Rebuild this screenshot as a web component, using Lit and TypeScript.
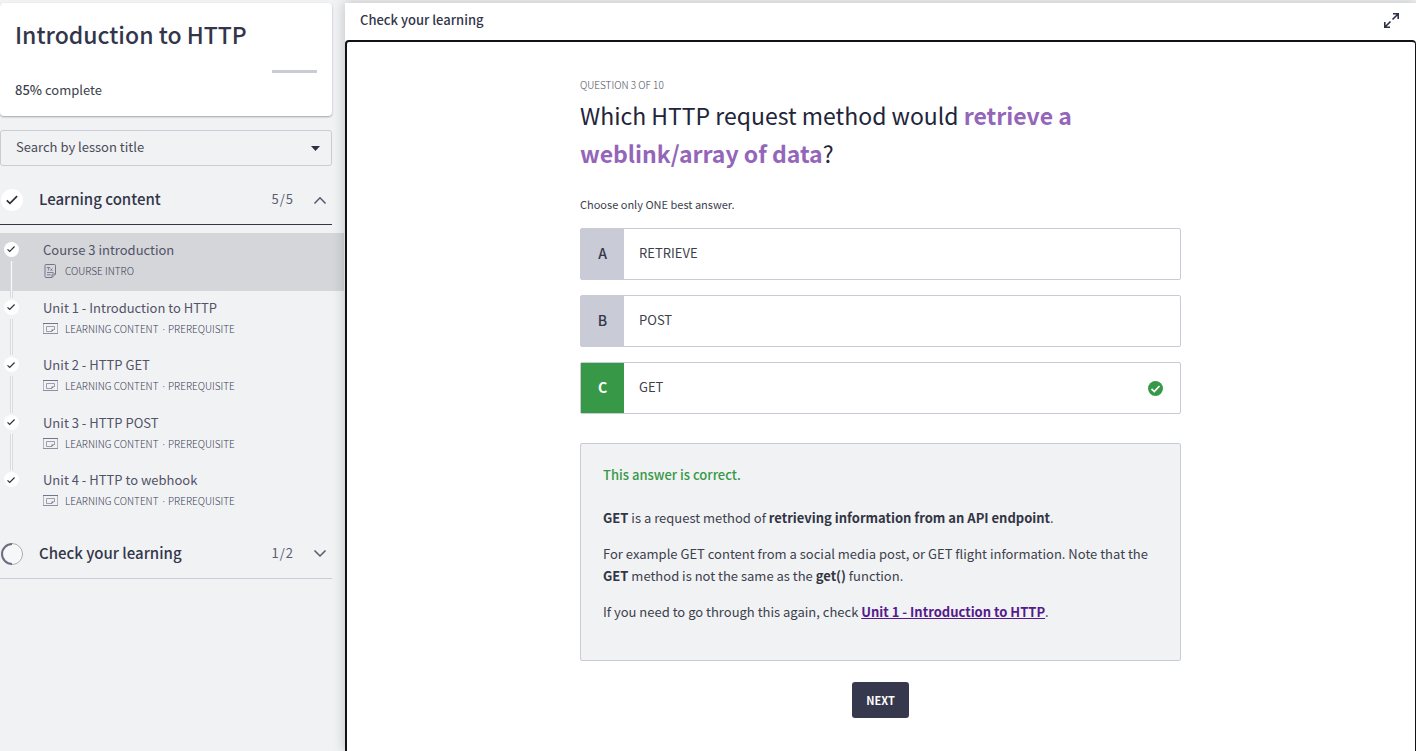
import { LitElement, html, css, nothing } from "lit";
import { customElement } from "lit/decorators.js";
import { classMap } from "lit/directives/class-map.js";

interface Lesson {
  title: string;
  meta: string[];
  kind: "text" | "media";
}

interface Answer {
  letter: string;
  text: string;
}

const LESSONS: Lesson[] = [
  { title: "Course 3 introduction", meta: ["COURSE INTRO"], kind: "text" },
  { title: "Unit 1 - Introduction to HTTP", meta: ["LEARNING CONTENT", "PREREQUISITE"], kind: "media" },
  { title: "Unit 2 - HTTP GET", meta: ["LEARNING CONTENT", "PREREQUISITE"], kind: "media" },
  { title: "Unit 3 - HTTP POST", meta: ["LEARNING CONTENT", "PREREQUISITE"], kind: "media" },
  { title: "Unit 4 - HTTP to webhook", meta: ["LEARNING CONTENT", "PREREQUISITE"], kind: "media" },
];

const ANSWERS: Answer[] = [
  { letter: "A", text: "RETRIEVE" },
  { letter: "B", text: "POST" },
  { letter: "C", text: "GET" },
];

const CORRECT = "C";

const textIcon = html`<svg class="kind" width="15" height="14" viewBox="0 0 15 14" fill="none" stroke="#73758a" aria-hidden="true">
  <path d="M9 13.500H3a1 1 0 0 1-1-1v-11a1 1 0 0 1 1-1h8.500a1 1 0 0 1 1 1V10zM9 13.500V11a1 1 0 0 1 1-1h2.500" />
  <path d="M3.800 3.500h3.200M5.400 3.500v3M7.500 4.500l1.800 2.300M9.300 4.500L7.500 6.800M4 8.500h6.500M4 10.800h3.500" stroke-width=".9" />
</svg>`;

const mediaIcon = html`<svg class="kind" width="15" height="14" viewBox="0 0 15 14" fill="none" aria-hidden="true">
  <rect x=".5" y="1.500" width="14" height="10" stroke="#b3b5c1" />
  <path d="M0 1.500h15" stroke="#73758a" />
  <path d="M0 11.500h15" stroke="#8f91a2" />
  <path d="M9 9.500H3.500v-5h8v3.500" stroke="#9c9eae" />
  <path d="M8.500 10V7.500h3z" fill="#73758a" />
</svg>`;

@customElement("check-mark")
class CheckMark extends LitElement {
  static styles = css`
    :host {
      display: grid;
      place-items: center;
      border-radius: 50%;
      background: #fff;
    }
    svg {
      width: 54%;
      height: 54%;
    }
  `;

  render() {
    return html`<svg viewBox="0 0 12 12" fill="none" stroke="#2b2c34" stroke-width="1.700" aria-hidden="true">
      <path d="M.8 6.500l3.200 3L11.200 2.200" />
    </svg>`;
  }
}

@customElement("course-section")
class CourseSection extends LitElement {
  static properties = {
    label: {},
    count: {},
    open: { type: Boolean },
    done: { type: Boolean },
  };
  declare label: string;
  declare count: string;
  declare open: boolean;
  declare done: boolean;

  static styles = css`
    :host {
      display: block;
    }
    .head {
      display: grid;
      grid-template-columns: 23px 1fr auto 16px;
      align-items: center;
      width: 100%;
      height: 50px;
      padding: 0 5px 0 1px;
      border: 0;
      border-bottom: 1px solid #c9cbd6;
      background: none;
      color: #33364b;
      font: 500 15px/24px "Noto Sans CJK SC", "Noto Sans", sans-serif;
      text-align: left;
      cursor: pointer;
    }
    .open {
      border-bottom-color: #33364b;
    }
    check-mark,
    .ring {
      width: 22px;
      height: 22px;
    }
    .label {
      padding: 0 0 1px 15px;
    }
    .count {
      padding: 0 17px 1px 0;
      font-size: 13px;
      font-weight: 400;
      letter-spacing: 1px;
      color: #5b5d70;
    }
  `;

  render() {
    return html`<button
      class=${classMap({ head: true, open: this.open })}
      aria-expanded=${this.open ? "true" : "false"}
      @click=${() => (this.open = !this.open)}
    >
      ${this.done
        ? html`<check-mark></check-mark>`
        : html`<svg class="ring" viewBox="0 0 22 22" fill="none" aria-hidden="true">
            <circle cx="11" cy="11" r="10" fill="#f6f7f8" stroke="#fff" stroke-width="2" />
            <path d="M11 .5a10.500 10.500 0 0 1 0 21" stroke="#a3a5b2" />
            <path d="M11 1a10 10 0 0 0 0 20" stroke="#6a6c80" stroke-width="2" />
          </svg>`}
      <span class="label">${this.label}</span>
      <span class="count">${this.count}</span>
      <svg width="16" height="16" viewBox="0 0 16 16" fill="none" stroke="#55576b" stroke-width="1.500" aria-hidden="true">
        <path d=${this.open ? "M3.500 11.500L9 5.800L14.500 11.500" : "M3.500 4.500L9 10L14.500 4.500"} />
      </svg>
    </button>`;
  }
}

@customElement("app-root")
class AppRoot extends LitElement {
  static properties = { selected: { state: true }, current: { state: true } };
  declare selected: string;
  declare current: number;

  constructor() {
    super();
    this.selected = CORRECT;
    this.current = 0;
  }

  static styles = css`
    :host {
      display: flex;
      min-height: 100vh;
      box-sizing: border-box;
      padding-top: 3px;
      overflow: hidden;
      background: #f1f2f4;
      color: #3c3f4c;
      font: 400 13px/22px "Noto Sans CJK SC", "Noto Sans", sans-serif;
    }
    *,
    *::before {
      box-sizing: border-box;
    }
    h1,
    h2,
    p,
    ul,
    fieldset {
      margin: 0;
      padding: 0;
      border: 0;
    }
    .side {
      flex: 0 0 345px;
      padding-right: 13px;
    }
    .card {
      padding: 12px 15px 15px;
      border-radius: 4px;
      background: #fff;
      box-shadow: 0 1px 2px rgba(40, 42, 60, 0.4);
    }
    .card h1 {
      font-size: 23px;
      line-height: 38px;
      font-weight: 500;
      color: #33364b;
    }
    .progress {
      height: 3px;
      margin: 17px 0 6px;
      background: #c9cbd6;
    }
    .bar {
      height: 100%;
      background: #fff;
    }
    .card b {
      font-weight: 500;
    }
    .search {
      display: grid;
      align-items: center;
      margin: 14px 0 9px;
    }
    .search select,
    .search svg {
      grid-area: 1 / 1;
    }
    .search svg {
      justify-self: end;
      margin-right: 12px;
      pointer-events: none;
    }
    .search select {
      appearance: none;
      width: 100%;
      height: 36px;
      padding: 0 15px 2px;
      border: 1px solid #c9cbd6;
      border-radius: 3px;
      background: none;
      color: #4a4c58;
      font: inherit;
    }
    .lessons {
      display: grid;
      grid-auto-rows: 1fr;
      min-height: 304px;
      margin-right: -12px;
      padding: 8px 0;
      list-style: none;
    }
    .lesson {
      display: grid;
      grid-template-columns: 15px 1fr;
      column-gap: 24px;
      width: 100%;
      height: 100%;
      padding: 7px 4px 0;
      border: 0;
      background: none;
      color: #515368;
      font: inherit;
      text-align: left;
      cursor: pointer;
    }
    .lesson.current {
      background: #d5d6da;
    }
    .track {
      display: flex;
      flex-direction: column;
      align-items: center;
      gap: 4px;
      margin: 2px 0 -7px;
    }
    .track check-mark {
      width: 15px;
      height: 15px;
    }
    .line {
      flex: 1;
      width: 3px;
      border: solid #d9dadf;
      border-width: 0 1px;
      background: #f7f8f9;
    }
    .name {
      display: block;
      line-height: 20px;
    }
    .meta {
      display: flex;
      align-items: center;
      padding-top: 3px;
      font-size: 10px;
      font-weight: 300;
      line-height: 16px;
      color: #3c3e54;
    }
    .kind {
      margin-right: 7px;
    }
    .tag + .tag::before {
      content: "·";
      padding: 0 3px 0 4px;
      font-family: "Noto Sans", sans-serif;
    }
    .main {
      flex: 1;
      min-width: 0;
      display: flex;
      flex-direction: column;
      background: #fff;
      box-shadow: 0 0 12px rgba(0, 0, 0, 0.22);
    }
    .bar-top {
      display: flex;
      justify-content: space-between;
      align-items: center;
      height: 37px;
      padding: 0 15px 3px;
      color: #33364b;
      font-weight: 500;
    }
    .icon-button {
      display: grid;
      padding: 0;
      border: 0;
      background: none;
      cursor: pointer;
    }
    .frame {
      flex: 1;
      padding: 33px 16px 33px 15px;
      border: 2px solid #111217;
      border-right-width: 1px;
      border-bottom: 0;
      border-radius: 4px 4px 0 0;
    }
    .quiz {
      max-width: 601px;
      margin: 0 auto;
    }
    .step {
      font-size: 10px;
      font-weight: 300;
      line-height: 20px;
      color: #4a4c58;
    }
    .quiz h2 {
      padding: 1px 0 21px;
      font-size: 23px;
      line-height: 38px;
      font-weight: 400;
      color: #22253a;
    }
    .quiz h2 b {
      color: #9466ba;
      font-weight: 700;
    }
    .hint {
      padding-bottom: 13px;
      font-size: 11px;
    }
    .answers {
      display: grid;
      gap: 15px;
    }
    .answer {
      display: flex;
      align-items: center;
      height: 52px;
      padding-right: 17px;
      border: 1px solid #c9cbd6;
      border-radius: 2px;
      cursor: pointer;
    }
    .answer input {
      appearance: none;
      width: 0;
      height: 0;
      margin: 0;
    }
    .letter {
      display: grid;
      place-items: center;
      align-self: stretch;
      width: 43px;
      margin-right: 15px;
      padding-bottom: 2px;
      background: #c9cbd6;
      color: #33364b;
      font-size: 14px;
      font-weight: 500;
    }
    .right .letter {
      background: #379947;
      color: #fff;
      font-weight: 700;
    }
    .text {
      flex: 1;
      padding-bottom: 2px;
    }
    .feedback {
      display: grid;
      gap: 14px;
      margin: 29px 0 21px;
      padding: 20px 22px 37px;
      border: 1px solid #c9cbd6;
      border-radius: 2px;
      background: #f1f2f4;
    }
    .verdict {
      padding-bottom: 7px;
      color: #379947;
      font-weight: 500;
    }
    .feedback b {
      color: #313544;
      font-weight: 700;
    }
    .feedback a {
      color: #551a8b;
      font-weight: 700;
    }
    .next {
      display: block;
      height: 36px;
      margin: 0 auto;
      padding: 0 14px 1px;
      border: 0;
      border-radius: 3px;
      background: #36384d;
      color: #fff;
      font: inherit;
      font-size: 11px;
      font-weight: 700;
      cursor: pointer;
    }
  `;

  private renderLesson(lesson: Lesson, index: number) {
    return html`<li>
      <button
        class=${classMap({ lesson: true, current: index === this.current })}
        @click=${() => (this.current = index)}
      >
        <span class="track">
          <check-mark></check-mark>
          ${index < LESSONS.length - 1 ? html`<span class="line"></span>` : nothing}
        </span>
        <span>
          <span class="name">${lesson.title}</span>
          <span class="meta"
            >${lesson.kind === "text" ? textIcon : mediaIcon}
            ${lesson.meta.map((tag) => html`<span class="tag">${tag}</span>`)}</span
          >
        </span>
      </button>
    </li>`;
  }

  private renderAnswer(answer: Answer) {
    const right = this.selected === answer.letter && answer.letter === CORRECT;
    return html`<label class=${classMap({ answer: true, right })}>
      <input
        type="radio"
        name="answer"
        .value=${answer.letter}
        .checked=${this.selected === answer.letter}
        @change=${() => (this.selected = answer.letter)}
      />
      <span class="letter">${answer.letter}</span>
      <span class="text">${answer.text}</span>
      ${right
        ? html`<svg width="15" height="15" viewBox="0 0 15 15" aria-hidden="true">
            <circle cx="7.500" cy="7.500" r="7.500" fill="#379947" />
            <path d="M3.500 7.800l2.800 2.700L11.500 5" fill="none" stroke="#fff" stroke-width="1.700" />
          </svg>`
        : nothing}
    </label>`;
  }

  render() {
    const complete = 85;
    return html`
      <aside class="side">
        <div class="card">
          <h1>Introduction to HTTP</h1>
          <div class="progress" role="progressbar" aria-label="Course progress" aria-valuenow=${complete}>
            <div class="bar" style="width:${complete}%"></div>
          </div>
          <p><b>${complete}%</b> complete</p>
        </div>
        <div class="search">
          <select aria-label="Search by lesson title">
            <option>Search by lesson title</option>
          </select>
          <svg width="9" height="5" viewBox="0 0 9 5" aria-hidden="true"><path d="M0 0h9L4.500 5z" fill="#2d3047" /></svg>
        </div>
        <course-section label="Learning content" count="5/5" open done></course-section>
        <ul class="lessons">
          ${LESSONS.map((lesson, index) => this.renderLesson(lesson, index))}
        </ul>
        <course-section label="Check your learning" count="1/2"></course-section>
      </aside>
      <main class="main">
        <header class="bar-top">
          <span>Check your learning</span>
          <button class="icon-button" aria-label="Full screen">
            <svg width="20" height="20" viewBox="0 0 20 20" fill="none" stroke="#2d3047" stroke-width="1.600" aria-hidden="true">
              <path d="M12 3.800h5.200V9M17 4l-5.500 5.500M3.800 12v5.200H9M4 17l5.500-5.500" />
            </svg>
          </button>
        </header>
        <section class="frame">
          <div class="quiz">
            <p class="step">QUESTION 3 OF 10</p>
            <h2>Which HTTP request method would <b>retrieve a weblink/array of data</b>?</h2>
            <p class="hint">Choose only ONE best answer.</p>
            <fieldset class="answers" aria-label="Answers">
              ${ANSWERS.map((answer) => this.renderAnswer(answer))}
            </fieldset>
            <div class="feedback">
              <p class="verdict">This answer is correct.</p>
              <p><b>GET</b> is a request method of <b>retrieving information from an API endpoint</b>.</p>
              <p>
                For example GET content from a social media post, or GET flight information. Note that the
                <b>GET</b> method is not the same as the <b>get()</b> function.
              </p>
              <p>If you need to go through this again, check <a href="#unit-1">Unit 1 - Introduction to HTTP</a>.</p>
            </div>
            <button class="next">NEXT</button>
          </div>
        </section>
      </main>
    `;
  }
}
